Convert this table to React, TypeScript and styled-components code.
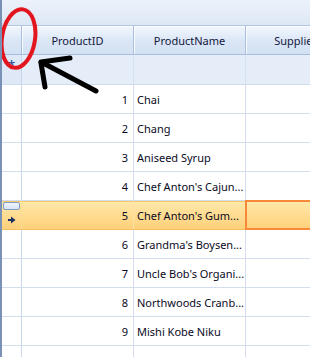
import React from 'react';
import styled, { createGlobalStyle, css } from 'styled-components';

const Global = createGlobalStyle`
  *, *::before, *::after { box-sizing: border-box; }
  html, body { margin: 0; padding: 0; background: #ffffff; }
  body { font-family: "Noto Sans", "Segoe UI", sans-serif; }
`;

const Grid = styled.div`
  position: relative;
  width: 310px;
  height: 357px;
  overflow: hidden;
  border-left: 2px solid #7a91b6;
  background: #ffffff;
  font-family: "Noto Sans", sans-serif;
  font-size: 11px;
  color: #000;
`;

const GroupPanel = styled.div`
  height: 26px;
  background: linear-gradient(#ecf2fb, #dde7f5);
  border-bottom: 1px solid #b3c6e1;
`;

const cols = css`
  display: grid;
  grid-template-columns: 20px 112px 112px 112px;
  width: 356px;
`;

const HeaderRow = styled.div`
  ${cols};
  height: 29px;
  border-bottom: 1px solid #a7bddb;
  background: linear-gradient(#f2f7fd, #dae6f6 55%, #d3e1f4);
`;

const HeaderCell = styled.div`
  display: flex;
  align-items: center;
  justify-content: center;
  border-right: 1px solid #a9bfdc;
  box-shadow: inset 1px 1px 0 #f8fbff;
  color: #14183c;
  font-size: 11px;
  white-space: nowrap;
  overflow: hidden;
`;

const NewRow = styled.div`
  ${cols};
  height: 30px;
  background: #e5edf9;
  border-bottom: 1px solid #cfdbee;
`;

const NewRowHeader = styled.div`
  display: flex;
  justify-content: center;
  padding-top: 4px;
  background: #dfe8f6;
  border-right: 1px solid #c7d5eb;
  color: #1f4488;
  font-size: 13px;
  line-height: 13px;
`;

const NewRowCell = styled.div`
  border-right: 1px solid #d6e0f0;
`;

const DataRow = styled.div<{ $selected?: boolean }>`
  ${cols};
  height: 29px;
  border-bottom: 1px solid #d3ddee;
  ${(p) =>
    p.$selected &&
    css`
      background: linear-gradient(#ffe9ab, #ffdc92 50%, #ffd17a);
      border-bottom-color: #f2c163;
      box-shadow: inset 0 1px 0 #f5c765;
    `}
`;

const RowHeaderCell = styled.div<{ $selected?: boolean }>`
  display: flex;
  flex-direction: column;
  align-items: flex-start;
  gap: 6px;
  padding: 1px 0 0 1px;
  border-right: 1px solid ${(p) => (p.$selected ? '#f9dc93' : '#c9d7ec')};
`;

const EditBox = styled.div`
  width: 17px;
  height: 8px;
  border: 1px solid #7f9bc6;
  border-radius: 2px;
  background: linear-gradient(#f0f5fd, #d7e3f5);
`;

const CurrentArrow = styled.svg`
  display: block;
  margin-left: 5px;
`;

const Cell = styled.div<{ $align?: 'left' | 'right'; $current?: boolean; $selected?: boolean }>`
  display: flex;
  align-items: center;
  justify-content: ${(p) => (p.$align === 'right' ? 'flex-end' : 'flex-start')};
  padding: ${(p) => (p.$align === 'right' ? '0 5px 0 0' : '0 0 0 3px')};
  border-right: 1px solid ${(p) => (p.$selected ? '#fbe3a6' : '#d3ddee')};
  white-space: nowrap;
  overflow: hidden;
  font-size: 11px;
  color: #0a0a1e;
  ${(p) =>
    p.$current &&
    css`
      box-shadow: inset 0 0 0 2px #f78a3a;
      margin: -1px 0 -1px -1px;
      border-right: none;
    `}
`;

const Overlay = styled.svg`
  position: absolute;
  left: -2px;
  top: 0;
  pointer-events: none;
`;

const rows: [number, string][] = [
  [1, 'Chai'],
  [2, 'Chang'],
  [3, 'Aniseed Syrup'],
  [4, "Chef Anton's Cajun..."],
  [5, "Chef Anton's Gum..."],
  [6, "Grandma's Boysen..."],
  [7, "Uncle Bob's Organi..."],
  [8, 'Northwoods Cranb...'],
  [9, 'Mishi Kobe Niku'],
  [10, 'Ikura'],
];

export default function App() {
  return (
    <>
      <Global />
      <Grid>
        <GroupPanel />
        <HeaderRow>
          <HeaderCell />
          <HeaderCell>ProductID</HeaderCell>
          <HeaderCell>ProductName</HeaderCell>
          <HeaderCell>SupplierID</HeaderCell>
        </HeaderRow>
        <NewRow>
          <NewRowHeader>*</NewRowHeader>
          <NewRowCell />
          <NewRowCell />
          <NewRowCell />
        </NewRow>
        {rows.map(([id, name]) => {
          const sel = id === 5;
          return (
            <DataRow key={id} $selected={sel}>
              <RowHeaderCell $selected={sel}>
                {sel && (
                  <>
                    <EditBox />
                    <CurrentArrow width="8" height="8" viewBox="0 0 8 8">
                      <path d="M0 3 H3 V0.5 L7.5 4 L3 7.5 V5 H0 Z" fill="#1b2f63" />
                    </CurrentArrow>
                  </>
                )}
              </RowHeaderCell>
              <Cell $align="right" $selected={sel}>{id}</Cell>
              <Cell $selected={sel}>{name}</Cell>
              <Cell $selected={sel} $current={sel} />
            </DataRow>
          );
        })}
        <Overlay width="310" height="357" viewBox="0 0 310 357">
          <ellipse
            cx="18.5"
            cy="38.5"
            rx="16.5"
            ry="29.5"
            transform="rotate(9 18.5 38.5)"
            fill="none"
            stroke="#e3161f"
            strokeWidth="4"
          />
          <g stroke="#000" strokeWidth="5" strokeLinecap="round" strokeLinejoin="round" fill="none">
            <path d="M43 63 L96 91" />
            <path d="M41 62 L70 58" />
            <path d="M41 63 L45 87" />
          </g>
        </Overlay>
      </Grid>
    </>
  );
}
